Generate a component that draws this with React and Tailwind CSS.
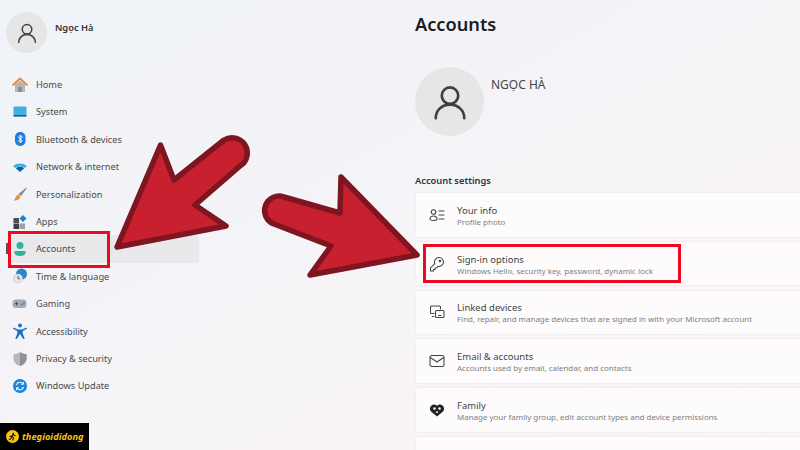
const Avatar = ({ size }) => (
  <svg width={size} height={size} viewBox="0 0 24 24" fill="none" stroke="#3f3f3f" strokeWidth="1.7" strokeLinecap="round">
    <circle cx="12" cy="8" r="5.2" />
    <path d="M3 22.2c0-5 4-8.6 9-8.6s9 3.6 9 8.6" />
  </svg>
);

const icons = {
  home: (
    <svg width="16" height="16" viewBox="0 0 16 16">
      <path d="M3 7.5 8 3.5l5 4V15H3z" fill="#b9b5b3" />
      <rect x="6.2" y="10" width="3.6" height="5" fill="#8d8987" />
      <path d="M1 8 8 1.5 15 8" fill="none" stroke="#e08a45" strokeWidth="1.8" strokeLinecap="round" strokeLinejoin="round" />
    </svg>
  ),
  system: (
    <svg width="16" height="16" viewBox="0 0 16 16">
      <rect x="1.5" y="2.5" width="13" height="8.5" fill="#3fb1dc" />
      <rect x="1.5" y="11" width="13" height="1.6" fill="#1c5f8c" />
    </svg>
  ),
  bluetooth: (
    <svg width="16" height="16" viewBox="0 0 16 16">
      <rect x="3" y="1" width="10.5" height="14" rx="5" fill="#1c7fe0" />
      <path d="M6 5.5 10.3 9.7 8.2 12V4l2.1 2.2L6 10.5" fill="none" stroke="#fff" strokeWidth="1" />
    </svg>
  ),
  network: (
    <svg width="16" height="16" viewBox="0 0 16 16">
      <path d="M1 7c4-3.3 10-3.3 14 0l-2.4 2c-2.7-2-6.5-2-9.200 0z" fill="#35b4e8" />
      <path d="M3.800 9.200c2.500-1.800 5.900-1.800 8.400 0L8 13z" fill="#0f5fa8" />
    </svg>
  ),
  brush: (
    <svg width="16" height="16" viewBox="0 0 16 16">
      <path d="M14.500 1.500 15 2 9 10 6.500 8z" fill="#8a8785" />
      <path d="M6 8.500 8.500 10.500C8 13.500 5 15 1.500 14.500 3.500 13 3.500 10 6 8.500z" fill="#e8913a" />
    </svg>
  ),
  apps: (
    <svg width="16" height="16" viewBox="0 0 16 16">
      <rect x="1.500" y="4" width="5.500" height="5" fill="#4a4f55" />
      <rect x="1.500" y="9.500" width="5.500" height="5.500" fill="#3a3f45" />
      <rect x="7.500" y="9.500" width="5.500" height="5.500" fill="#9aa0a6" />
      <path d="m11 1 3.500 3.500L11 8 7.500 4.500z" fill="#1c7fd0" />
    </svg>
  ),
  accounts: (
    <svg width="16" height="16" viewBox="0 0 16 16">
      <circle cx="8" cy="4.500" r="3.500" fill="#2fb39d" />
      <path d="M2.500 10h11v1.800c0 2-2.500 3.200-5.500 3.200s-5.500-1.200-5.500-3.200z" fill="#2fb39d" />
    </svg>
  ),
  time: (
    <svg width="16" height="16" viewBox="0 0 16 16">
      <circle cx="9.500" cy="6" r="5.500" fill="#2a86cf" />
      <circle cx="6" cy="10.500" r="4.500" fill="#e4e6ea" stroke="#b9bcc2" strokeWidth=".6" />
      <path d="M6 8v2.700h2" fill="none" stroke="#4b4f55" strokeWidth=".9" />
    </svg>
  ),
  gaming: (
    <svg width="16" height="16" viewBox="0 0 16 16">
      <rect x=".5" y="3.500" width="14" height="8.500" rx="3.500" fill="#a6abb2" />
      <path d="M3 7.700h3M4.500 6.200v3" stroke="#44484e" strokeWidth="1" />
      <circle cx="10" cy="8.600" r=".9" fill="#2277cc" />
      <circle cx="12" cy="6.800" r=".9" fill="#2277cc" />
    </svg>
  ),
  access: (
    <svg width="16" height="16" viewBox="0 0 16 16">
      <circle cx="8" cy="2.500" r="2" fill="#1872c9" />
      <path d="M1.500 4.500 6 6.500h4l4.500-2 .5 1.300L10.700 8v2.500l2 5-1.500.5L8 11l-3.200 5-1.500-.5 2-5V8L1 5.800z" fill="#1872c9" />
    </svg>
  ),
  privacy: (
    <svg width="16" height="16" viewBox="0 0 16 16">
      <path d="M8 1c2 1.500 4 2 6.500 2v4.500c0 3.500-2.500 6.300-6.500 7.500-4-1.200-6.500-4-6.500-7.500V3C4 3 6 2.500 8 1z" fill="#b4b8bd" />
      <path d="M8 1c2 1.500 4 2 6.500 2v4.500c0 3.500-2.500 6.300-6.500 7.500z" fill="#8e9298" />
    </svg>
  ),
  update: (
    <svg width="16" height="16" viewBox="0 0 16 16">
      <circle cx="8" cy="8" r="7" fill="#1a86dc" />
      <path d="M4.500 7a3.600 3.600 0 0 1 6.400-1.300M11.500 9a3.600 3.600 0 0 1-6.400 1.300" fill="none" stroke="#fff" strokeWidth="1.100" />
      <path d="M11.500 4v2.300H9.200M4.500 12V9.700h2.300" fill="none" stroke="#fff" strokeWidth="1" />
    </svg>
  ),
};

const nav = [
  ["home", "Home"],
  ["system", "System"],
  ["bluetooth", "Bluetooth & devices"],
  ["network", "Network & internet"],
  ["brush", "Personalization"],
  ["apps", "Apps"],
  ["accounts", "Accounts"],
  ["time", "Time & language"],
  ["gaming", "Gaming"],
  ["access", "Accessibility"],
  ["privacy", "Privacy & security"],
  ["update", "Windows Update"],
];

const stroke = { fill: "none", stroke: "#444", strokeWidth: 1.05, strokeLinecap: "round", strokeLinejoin: "round" };

const cardIcons = {
  info: (
    <svg width="16" height="16" viewBox="0 0 16 16" {...stroke}>
      <circle cx="4.500" cy="5" r="2.300" />
      <path d="M1 12c0-2 1.500-3 3.500-3S8 10 8 12c0 1-1.500 1.500-3.500 1.500S1 13 1 12z" />
      <path d="M10 4h5M10 8h5M10 12h5" />
    </svg>
  ),
  key: (
    <svg width="16" height="16" viewBox="0 0 16 16" {...stroke}>
      <path d="M10 1.500a4.500 4.500 0 1 1-1 8.900L7.400 12H6v1.500H4.500V15H1.500v-3l4.300-4.300A4.500 4.500 0 0 1 10 1.500z" />
      <circle cx="11" cy="5" r=".8" />
    </svg>
  ),
  linked: (
    <svg width="16" height="16" viewBox="0 0 16 16" {...stroke}>
      <path d="M11.500 5V3a1 1 0 0 0-1-1H2.500a1 1 0 0 0-1 1v5.500a1 1 0 0 0 1 1H5M3.500 12.500H5" />
      <rect x="6.500" y="6.500" width="8.500" height="7" rx="1" />
      <path d="M9.500 11.500h2.500" />
    </svg>
  ),
  mail: (
    <svg width="16" height="16" viewBox="0 0 16 16" {...stroke}>
      <rect x="1" y="2.500" width="14" height="11" rx="1.800" />
      <path d="M1.300 4.500 8 9l6.700-4.500" />
    </svg>
  ),
  family: (
    <svg width="16" height="16" viewBox="0 0 16 16">
      <path d="M8 14.500 2 9.500C.5 8 .5 5 2.500 3.500 4.500 2 6.800 2.500 8 4c1.200-1.500 3.500-2 5.500-.5 2 1.500 2 4.500.5 6z" fill="#222" />
      <circle cx="5.500" cy="6.500" r="1.200" fill="#fff" />
      <circle cx="10.500" cy="6.500" r="1.200" fill="#fff" />
      <path d="M6.500 9.500h3L8 11.500z" fill="#fff" />
    </svg>
  ),
};

const cards = [
  ["info", "Your info", "Profile photo"],
  ["key", "Sign-in options", "Windows Hello, security key, password, dynamic lock"],
  ["linked", "Linked devices", "Find, repair, and manage devices that are signed in with your Microsoft account"],
  ["mail", "Email & accounts", "Accounts used by email, calendar, and contacts"],
  ["family", "Family", "Manage your family group, edit account types and device permissions"],
];

export default function App() {
  return (
    <div
      className="relative flex w-[800px] h-[450px] overflow-hidden bg-gradient-to-br from-[#eff3f8] via-[#f5f4f7] to-[#fbf2f3] text-[#2a2a2a]"
      style={{ fontFamily: '"Noto Sans", "Open Sans", sans-serif' }}
    >
      <aside className="w-[199px] shrink-0 pl-[6px] pt-[12px]">
        <div className="flex items-center">
          <div className="flex h-[41px] w-[41px] items-center justify-center rounded-full bg-[#e6e6e6]">
            <Avatar size={22} />
          </div>
          <div className="ml-[8px] -mt-[10px] text-[9.300px] font-semibold leading-none text-[#333]">Ngọc Hà</div>
        </div>
        <nav className="mt-[18px]">
          {nav.map(([id, label]) => (
            <div
              key={id}
              className={`relative ml-[2px] flex h-[27.4px] items-center pl-[4px] ${id === "accounts" ? "rounded-[3px] bg-[#e9e9ec]" : ""}`}
            >
              {id === "accounts" && <span className="absolute -left-[2px] top-[8px] h-[11px] w-[2px] bg-[#555]" />}
              <span className="flex h-[16px] w-[22px] shrink-0 items-center">{icons[id]}</span>
              <span className="ml-[2px] text-[9.200px] leading-none text-[#4a4a4a]">{label}</span>
            </div>
          ))}
        </nav>
      </aside>

      <main className="ml-[216px] min-w-0 flex-1 pt-[11px]">
        <h1 className="text-[18.200px] font-semibold leading-[26px] text-[#1d1d1d]">Accounts</h1>
        <div className="mt-[30px] flex">
          <div className="flex h-[69px] w-[69px] shrink-0 items-center justify-center rounded-full bg-[#e6e6e6]">
            <Avatar size={38} />
          </div>
          <div className="ml-[7px] mt-[10px] text-[12px] leading-[16px] text-[#444]">NGỌC HÀ</div>
        </div>
        <h2 className="mt-[39px] text-[9.300px] font-semibold leading-[12px] text-[#333]">Account settings</h2>
        <div className="mt-[5px] flex flex-col gap-[3.300px]">
          {cards.map(([id, title, sub]) => (
            <div key={id} className="flex h-[45.500px] items-center rounded-l-[3px] border border-r-0 border-[#f1eeee] bg-[#fdfbfc] pl-[13px]">
              <span className="flex h-[16px] w-[28px] shrink-0 items-center">{cardIcons[id]}</span>
              <div className="pt-[3px]">
                <div className="text-[9.500px] leading-[11px] text-[#444]">{title}</div>
                <div className="mt-[1px] text-[7.950px] leading-[11px] text-[#808080]">{sub}</div>
              </div>
            </div>
          ))}
          <div className="h-[45.500px] rounded-l-[3px] border border-r-0 border-[#f1eeee] bg-[#fdfbfc]" />
        </div>
      </main>

      <div className="absolute bottom-0 left-0 flex h-[27px] w-[89px] items-center bg-black pl-[6px]">
        <svg width="13" height="13" viewBox="0 0 13 13">
          <circle cx="6.500" cy="6.500" r="6.500" fill="#f5c518" />
          <path d="M7.500 2.800 6 6 3.500 6.500M6 6l1.500 2-1 2.500M6 6.500 4.500 9 2.800 9.500M7 4.500l2.500 1.500" fill="none" stroke="#111" strokeWidth="1.100" />
        </svg>
        <span className="ml-[3px] text-[9.300px] font-bold italic leading-none text-[#f5c518]">thegioididong</span>
      </div>

      <div className="absolute left-[8px] top-[231px] h-[37px] w-[102px] border-[3px] border-[#ee0820]" />
      <div className="absolute left-[423px] top-[244px] h-[39px] w-[258px] border-[3px] border-[#ee0820]" />

      <svg className="absolute left-0 top-0" width="800" height="450" fill="#c92030" stroke="#7e1520" strokeWidth="5.500" strokeLinejoin="round">
        <path d="M117 247 L160.500 145 L174 180 L224 140 A14.500 14.500 0 0 1 240 166 L195 205 L226 226 Z" />
        <path d="M341 177 L417 255 L310 275 L331 246 L274 224 A14 14 0 0 1 284 197 L340 213 Z" />
      </svg>
    </div>
  );
}
